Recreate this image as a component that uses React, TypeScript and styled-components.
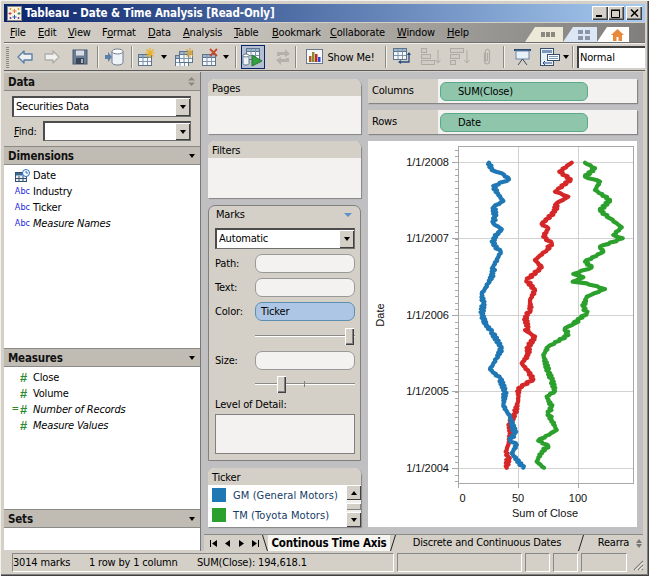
import React from "react";
import styled, { createGlobalStyle } from "styled-components";

const UI = `"DejaVu Sans Condensed", "DejaVu Sans", "Liberation Sans", sans-serif`;
const FACE = "#d4d0c8";

const Global = createGlobalStyle`
  html, body { margin: 0; padding: 0; background: ${FACE}; }
  * { box-sizing: border-box; }
  body { font-family: ${UI}; font-size: 11px; letter-spacing: -0.18px; color: #000; }
`;

const Win = styled.div`
  width: 649px; height: 576px; overflow: hidden; background: ${FACE};
  padding: 4px 4px 4px 4px; display: flex; flex-direction: column;
  box-shadow: inset 1px 1px 0 #f4f2ec, inset -1px -1px 0 #404040, inset -2px -2px 0 #808080;
`;
const TitleBar = styled.div`
  height: 18px; flex: none; display: flex; align-items: center; padding: 0 3px;
  background: linear-gradient(90deg, #0a246a 0%, #a6caf0 100%);
  color: #fff; font-weight: bold; font-size: 11.5px; letter-spacing: -0.1px;
`;
const TitleText = styled.span`margin-left: 3px; flex: 1; white-space: nowrap;`;
const WinBtn = styled.div<{ $gap?: number }>`
  width: 16px; height: 14px; margin-left: ${p => p.$gap ?? 0}px; background: ${FACE}; display: flex; align-items: center; justify-content: center;
  box-shadow: inset 1px 1px 0 #fff, inset -1px -1px 0 #404040, inset -2px -2px 0 #808080;
`;
const MenuBar = styled.div`
  height: 20px; margin-top: 1px; flex: none; display: flex; align-items: stretch;
  background: linear-gradient(90deg, ${FACE} 0%, #c8c4bd 35%, #a8a5a0 60%, #807f7d 100%);
  border-bottom: 1px solid #6e6e6e;
  padding-left: 6px;
`;
const MenuItem = styled.div<{ $w: number }>`
  width: ${p => p.$w}px; line-height: 20px; white-space: nowrap;
  u { text-underline-offset: 1px; }
`;
const ViewTabs = styled.div`margin-left: auto; display: flex; align-items: flex-end; padding-right: 16px;`;
const ViewTab = styled.div<{ $bg: string; $w: number }>`
  width: ${p => p.$w}px; height: 15px; background: ${p => p.$bg}; display: flex; align-items: center; justify-content: center;
  padding-left: 8px; clip-path: polygon(10px 0, 100% 0, 100% 100%, 0 100%);
`;
const Toolbar = styled.div`
  height: 28px; flex: none; display: flex; align-items: center; background: ${FACE};
  border-top: 1px solid #f0eee8; border-bottom: 1px solid #5c5c5c; overflow: hidden;
`;
const Grip = styled.div`
  width: 3px; height: 21px; margin: 0 5px 0 2px; flex: none;
  background: repeating-linear-gradient(180deg, #8a8880 0 1px, ${FACE} 1px 2px);
`;
const Slot = styled.div<{ $w: number; $on?: boolean }>`
  width: ${p => p.$w}px; height: 24px; flex: none; display: flex; align-items: center; justify-content: center; white-space: nowrap;
  ${p => p.$on ? `background: #b4bfd2; border: 1px solid #0a246a;` : ``}
`;
const Sep = styled.div`
  width: 2px; height: 22px; flex: none; background: #8c8a84; border-right: 1px solid #f4f2ec;
`;
const Caret = styled.div`
  width: 0; height: 0; border-left: 3.5px solid transparent; border-right: 3.5px solid transparent; border-top: 4px solid #000;
`;
const NormalBox = styled.div`
  width: 70px; height: 22px; margin-left: 3px; flex: none; background: #fff; border-top: 2px solid #404040; border-left: 2px solid #404040;
  line-height: 20px; padding-left: 1px;
`;
const Main = styled.div`flex: 1; min-height: 0; display: flex; margin-top: 1px; padding-right: 2px;`;
const Left = styled.div`
  width: 197px; flex: none; display: flex; flex-direction: column; background: ${FACE}; padding-top: 1px;
  border-right: 1px solid #777;
`;
const PanelHead = styled.div<{ $top?: boolean }>`
  height: ${p => p.$top ? 18 : 19}px; flex: none; background: #c0bcb4; border-top: 1px solid #8a8a86; border-bottom: 1px solid #8a8a86;
  display: flex; align-items: center; justify-content: space-between; padding: 0 5px 0 4px;
  font-weight: bold; font-size: 11.5px; color: #111;
  ${p => p.$top ? `border-top: none;` : ``}
`;
const DataBody = styled.div`
  height: 55px; flex: none; background: ${FACE}; padding: 5px 9px 0 8px; display: flex; flex-direction: column; gap: 4px;
`;
const FindRow = styled.div`display: flex; align-items: center; justify-content: space-between; padding-left: 2px;`;
const Combo = styled.div<{ $w: number; $h?: number }>`
  width: ${p => p.$w}px; height: ${p => p.$h ?? 20}px; background: #fff; display: flex; align-items: stretch; justify-content: space-between; flex: none;
  border-top: 2px solid #4c4c4c; border-left: 2px solid #4c4c4c; border-right: 1px solid #707070; border-bottom: 1px solid #707070;
`;
const ComboText = styled.span`padding-left: 2px; line-height: 17px;`;
const ComboBtn = styled.div`
  width: 15px; background: ${FACE}; display: flex; align-items: center; justify-content: center;
  box-shadow: inset 1px 1px 0 #fff, inset -1px -1px 0 #404040;
`;
const List = styled.div<{ $h: number }>`
  height: ${p => p.$h}px; flex: none; background: #fff; padding-top: 2px;
`;
const Row = styled.div<{ $i?: boolean }>`
  height: 16px; display: flex; align-items: center; font-style: ${p => p.$i ? "italic" : "normal"};
`;
const RowIcon = styled.span`width: 29px; flex: none; display: flex; justify-content: flex-end; padding-right: 3px; align-items: center;`;
const Abc = styled.span`color: #2222dd; font-size: 9px; font-style: normal; letter-spacing: 0;`;
const Hash = styled.span`color: #2d8a2d; font-size: 13px; font-weight: bold; font-style: normal; font-family: "Liberation Sans", sans-serif; line-height: 13px; margin-right: 3px;`;
const Eq = styled.span`color: #2d8a2d; font-size: 10px; font-style: normal; line-height: 10px; margin-right: 1px;`;
const Work = styled.div`
  flex: 1; min-width: 0; display: flex; flex-direction: column; background: #c0c0c3;
`;
const WorkBody = styled.div`flex: 1; min-height: 0; display: flex; gap: 7px; padding: 7px 6px 7px 7px;`;
const Col1 = styled.div`width: 153px; flex: none; display: flex; flex-direction: column; gap: 7px;`;
const Col2 = styled.div`width: 269px; flex: none; display: flex; flex-direction: column; gap: 7px;`;
const Card = styled.div<{ $h: number }>`
  height: ${p => p.$h}px; flex: none; background: #f3f2f0; border-radius: 7px 7px 0 0; overflow: hidden;
  box-shadow: 1px 1px 1px #858585; display: flex; flex-direction: column;
`;
const CardHead = styled.div`height: 17px; flex: none; background: ${FACE}; line-height: 19px; padding-left: 4px;`;
const Marks = styled.div`
  height: 256px; flex: none; background: ${FACE}; border: 1px solid #808080; border-radius: 7px 7px 0 0;
  padding: 0 5px 0 6px; display: flex; flex-direction: column;
`;
const MarksHead = styled.div`height: 22px; flex: none; display: flex; align-items: center; justify-content: space-between; padding: 0 3px 5px 1px;`;
const Tri = styled.div`width: 0; height: 0; border-left: 4px solid transparent; border-right: 4px solid transparent; border-top: 4px solid #5f8fc9;`;
const ShelfRow = styled.div<{ $mt: number }>`
  margin-top: ${p => p.$mt}px; display: flex; align-items: center; height: 19px; flex: none;
`;
const ShelfLabel = styled.div`width: 40px; flex: none;`;
const Pill = styled.div<{ $blue?: boolean }>`
  flex: 1; height: 19px; border-radius: 7px; line-height: 17px; padding-left: 5px;
  background: ${p => p.$blue ? "#adc6e6" : "#f3f2f0"}; border: 1px solid ${p => p.$blue ? "#5c8fb0" : "#999"};
`;
const Slider = styled.div<{ $mt: number }>`
  margin-top: ${p => p.$mt}px; height: 17px; flex: none; margin-left: 40px; position: relative;
  &::before { content: ""; position: absolute; left: 0; right: 0; top: 7px; height: 2px; background: linear-gradient(#8a8a86 50%, #fff 50%); }
`;
const Thumb = styled.div<{ $x: number }>`
  position: absolute; left: ${p => p.$x}px; top: 0; width: 9px; height: 17px; background: ${FACE};
  box-shadow: inset 1px 1px 0 #fff, inset -1px -1px 0 #404040, inset -2px -2px 0 #808080;
`;
const Tick = styled.div<{ $x: number }>`position: absolute; left: ${p => p.$x}px; top: 5px; width: 1px; height: 6px; background: #808080;`;
const DetailLabel = styled.div`margin-top: 4px; height: 15px; line-height: 15px; flex: none;`;
const Detail = styled.div`height: 40px; flex: none; margin-top: 2px; background: #f3f2f0; border: 1px solid #808080;`;
const Legend = styled.div`flex: 1; display: flex; background: #fff; min-height: 0;`;
const LegendRows = styled.div`flex: 1; padding: 3px 0 0 4px; display: flex; flex-direction: column; gap: 6px;`;
const LegendRow = styled.div`display: flex; align-items: center; height: 14px; color: #143a66; white-space: nowrap; gap: 7px; letter-spacing: 0.1px;`;
const Swatch = styled.div<{ $c: string }>`width: 14px; height: 14px; background: ${p => p.$c};`;
const Scroll = styled.div`width: 15px; flex: none; display: flex; flex-direction: column; justify-content: space-between; background: #f2f0ec;`;
const ScrollBtn = styled.div`
  height: 15px; background: ${FACE}; display: flex; align-items: center; justify-content: center;
  box-shadow: inset 1px 1px 0 #fff, inset -1px -1px 0 #404040;
`;
const ScrollThumb = styled.div`height: 7px; background: ${FACE}; box-shadow: inset 1px 1px 0 #fff, inset -1px -1px 0 #808080;`;
const CaretUp = styled(Caret)`border-top: none; border-bottom: 4px solid #000;`;
const Shelf = styled.div`
  height: 24px; flex: none; display: flex; align-items: center; background: #f3f2f0; box-shadow: 1px 1px 1px #858585;
`;
const ShelfName = styled.div`
  width: 70px; height: 100%; flex: none; background: ${FACE}; line-height: 24px; padding-left: 4px;
`;
const GreenPill = styled.div`
  width: 148px; height: 19px; margin-left: 2px; background: #8fc5ab; border: 1px solid #5aa98a; border-radius: 6px;
  line-height: 17px; padding-left: 17px;
`;
const ChartBox = styled.div`flex: 1; min-height: 0; background: #fff; display: flex;`;
const TabBar = styled.div`
  height: 17px; flex: none; background: ${FACE}; border-top: 1px solid #8a8a86; display: flex; align-items: stretch; overflow: hidden;
  margin-left: 3px;
`;
const NavBtns = styled.div`width: 58px; flex: none; display: flex; align-items: center; padding-left: 5px; gap: 6px;`;
const NavBtn = styled.div`width: 8px; display: flex; justify-content: center;`;
const SheetTab = styled.div<{ $w: number; $on?: boolean }>`
  width: ${p => p.$w}px; flex: none; text-align: center; line-height: 16px; white-space: nowrap; overflow: hidden;
  font-weight: ${p => p.$on ? "bold" : "normal"}; font-size: ${p => p.$on ? "11.5px" : "11px"};
  background: ${p => p.$on ? "#f6f5f2" : "transparent"};
`;
const Slant = styled.svg`width: 6px; height: 16px; flex: none; display: block;`;
const TabArrows = styled.div`flex: 1; display: flex; flex-direction: column; align-items: center; justify-content: center; gap: 1px;`;
const SmallUp = styled(CaretUp)`border-bottom-color: #777;`;
const SmallDown = styled(Caret)`border-top-color: #777;`;
const StatusBar = styled.div`
  height: 21px; flex: none; display: flex; align-items: stretch; padding: 2px 0 0 0; gap: 3px; background: ${FACE}; position: relative;
`;
const Cell = styled.div<{ $w: number }>`
  width: ${p => p.$w}px; flex: none; border-top: 1px solid #888; border-left: 1px solid #888; border-bottom: 1px solid #fff; border-right: 1px solid #fff;
  display: flex; align-items: center; white-space: nowrap;
`;
const StatusText = styled.span<{ $w: number }>`width: ${p => p.$w}px; flex: none;`;
const FirstCell = styled(Cell)`margin-left: 8px;`;
const SizeGrip = styled.svg`width: 12px; height: 12px; position: absolute; right: 1px; bottom: 1px;`;

/* ---------- icons ---------- */
const Logo = () => (
  <svg width="15" height="15" viewBox="0 0 15 15">
    <rect x="0.5" y="0.5" width="14" height="14" fill="#f6f2e8" stroke="#8a8680" />
    <path d="M7.5 3v4M5.5 5h4" stroke="#e8762c" />
    <path d="M7.5 9v4M5.5 11h4" stroke="#2a5ea8" />
    <path d="M3 6v3M1.5 7.500h3" stroke="#c23a3a" />
    <path d="M12 6v3M10.500 7.500h3" stroke="#2a8a5e" />
    <path d="M3.500 2v2M2.500 3h2M11.500 2v2M10.500 3h2" stroke="#d8a020" />
    <path d="M3.500 11v2M2.500 12h2M11.500 11v2M10.500 12h2" stroke="#7a3fa0" />
  </svg>
);
const Arrow = ({ c, flip }: { c: string; flip?: boolean }) => (
  <svg width="16" height="14" viewBox="0 0 16 14" transform={flip ? "scale(-1 1)" : undefined}>
    <path d="M1 7 L7 1 V4 H15 V10 H7 V13 Z" fill="#f0f0f0" stroke={c} strokeWidth="1.400" strokeLinejoin="round" />
  </svg>
);
const Save = () => (
  <svg width="16" height="16" viewBox="0 0 16 16">
    <rect x="1" y="1" width="14" height="14" fill="#6a7f96" stroke="#46586c" />
    <rect x="4" y="1.500" width="8" height="5" fill="#d8dee4" />
    <rect x="4" y="9" width="8" height="6" fill="#3a4656" />
    <rect x="9" y="10" width="2" height="4" fill="#a8b2bc" />
  </svg>
);
const Cylinder = () => (
  <svg width="20" height="18" viewBox="0 0 20 18">
    <path d="M0 7h3V4l4 5-4 5v-3H0z" fill="#5a7fa8" />
    <path d="M7 3.500v11c0 1.500 2.500 2.500 5.500 2.500s5.500-1 5.500-2.500v-11z" fill="#eef3f8" stroke="#6c7c8c" />
    <ellipse cx="12.500" cy="3.500" rx="5.500" ry="2.500" fill="#fff" stroke="#6c7c8c" />
  </svg>
);
const Grid = ({ x, y }: { x: number; y: number }) => (
  <g transform={`translate(${x} ${y})`}>
    <rect x="0.500" y="0.500" width="13" height="11" fill="#f4f8fc" stroke="#5e7488" />
    <rect x="0.500" y="0.500" width="13" height="3" fill="#9cb6d0" stroke="#5e7488" />
    <path d="M5 1v10M9.500 1v10M1 7.500h12" stroke="#7e94a8" />
  </g>
);
const Star = ({ x, y, c = "#f0b020" }: { x: number; y: number; c?: string }) => (
  <path transform={`translate(${x} ${y})`} d="M5 0v10M0 5h10M1.500 1.500l7 7M8.500 1.500l-7 7" stroke={c} strokeWidth="1.200" />
);
const NewSheet = () => (
  <svg width="18" height="18" viewBox="0 0 18 18"><Grid x={0} y={6} /><Star x={7} y={0} /></svg>
);
const NewDash = () => (
  <svg width="18" height="18" viewBox="0 0 18 18">
    <Grid x={0} y={7} /><Grid x={4} y={3} /><Star x={10} y={0} c="#d8a840" />
  </svg>
);
const Clear = () => (
  <svg width="18" height="18" viewBox="0 0 18 18">
    <Grid x={0} y={6} />
    <path d="M8 1l7 7M15 1l-7 7" stroke="#c8482c" strokeWidth="1.800" />
  </svg>
);
const Run = () => (
  <svg width="22" height="20" viewBox="0 0 22 20">
    <Grid x={4} y={1} />
    <path d="M1 8.500v8c0 2 6 2 6 0v-8z" fill="#eef3f8" stroke="#66788a" />
    <ellipse cx="4" cy="8.500" rx="3" ry="1.500" fill="#fff" stroke="#66788a" />
    <path d="M10 8l10 6-10 5z" fill="#35a040" stroke="#257a30" />
  </svg>
);
const Refresh = () => (
  <svg width="16" height="18" viewBox="0 0 16 18">
    <path d="M2 8 V4 H10 V1 L15 6 L10 9 V7 H5 V8 Z M14 10 V14 H6 V17 L1 12 L6 9 V11 H11 V10 Z" fill="#b4b1aa" />
  </svg>
);
const ShowMe = () => (
  <svg width="17" height="16" viewBox="0 0 17 16">
    <rect x="0.500" y="0.500" width="16" height="14" fill="#f6f8fa" stroke="#66788a" />
    <rect x="3" y="7" width="2.500" height="6" fill="#b05a20" />
    <rect x="6" y="3" width="2.500" height="10" fill="#8a8a2a" />
    <rect x="9" y="5" width="2.500" height="8" fill="#c02a2a" />
    <rect x="12" y="8" width="2.500" height="5" fill="#2a4ad0" />
  </svg>
);
const Swap = () => (
  <svg width="20" height="18" viewBox="0 0 20 18">
    <Grid x={0} y={0} />
    <path d="M16 5v9H6" fill="none" stroke="#2a4a80" strokeWidth="1.300" />
    <path d="M14 7l2-3 2 3zM8 12l-3 2 3 2z" fill="#2a4a80" />
  </svg>
);
const SortA = () => (
  <svg width="20" height="18" viewBox="0 0 20 18" fill="#cfccc5" stroke="#aeaba4">
    <rect x="0.500" y="0.500" width="5" height="4" /><rect x="0.500" y="6.500" width="9" height="4" /><rect x="0.500" y="12.500" width="13" height="4" />
    <path d="M17 2v12M14.500 12l2.500 3 2.500-3" fill="none" />
  </svg>
);
const SortD = () => (
  <svg width="20" height="18" viewBox="0 0 20 18" fill="#cfccc5" stroke="#aeaba4">
    <rect x="0.500" y="0.500" width="13" height="4" /><rect x="0.500" y="6.500" width="9" height="4" /><rect x="0.500" y="12.500" width="5" height="4" />
    <path d="M17 2v12M14.500 12l2.500 3 2.500-3" fill="none" />
  </svg>
);
const Clip = () => (
  <svg width="10" height="18" viewBox="0 0 10 18">
    <path d="M2.500 5v8c0 4 5 4 5 0V3.500c0-3-4-3-4 0V12c0 1 2 1 2 0V5" fill="none" stroke="#aeaba4" strokeWidth="1.200" />
  </svg>
);
const Present = () => (
  <svg width="17" height="18" viewBox="0 0 17 18">
    <rect x="0" y="1" width="17" height="2" fill="#2a4a70" />
    <rect x="2" y="3" width="13" height="8" fill="#e8f0f8" stroke="#6a88a8" />
    <path d="M8.500 11L4 17M8.500 11L13 17" stroke="#3a4a5a" />
  </svg>
);
const Fit = () => (
  <svg width="20" height="18" viewBox="0 0 20 18">
    <rect x="0.500" y="0.500" width="13" height="17" fill="#e8f0f8" stroke="#3a4e68" />
    <rect x="2" y="2" width="10" height="3" fill="#7a96b8" />
    <rect x="7.500" y="6.500" width="12" height="6" fill="#fff" stroke="#3a4e68" />
    <path d="M9 8.500h9M9 10.500h9" stroke="#7a96b8" />
    <path d="M12 15H3M5 13l-2 2 2 2" fill="none" stroke="#2a4a80" />
  </svg>
);
const House = () => (
  <svg width="13" height="12" viewBox="0 0 13 12">
    <path d="M6.500 0L13 6H11V12H7.500V8H5.500V12H2V6H0Z" fill="#e8883a" />
  </svg>
);
const Bars = () => (
  <svg width="14" height="5" viewBox="0 0 14 5"><path d="M0 0h4v5H0zM5 0h4v5H5zM10 0h4v5h-4z" fill="#8c8a80" /></svg>
);
const Squares = () => (
  <svg width="12" height="10" viewBox="0 0 12 10"><path d="M0 0h5v4H0zM7 0h5v4H7zM0 6h5v4H0zM7 6h5v4H7z" fill="#8a96a8" /></svg>
);
const DateIcon = () => (
  <svg width="15" height="13" viewBox="0 0 15 13">
    <rect x="0.500" y="3.500" width="11" height="9" fill="#eaf0f6" stroke="#33506e" />
    <rect x="1" y="4" width="10" height="2.500" fill="#3a6a9a" />
    <path d="M4 7v5M8 7v5M1 9.500h10" stroke="#33506e" />
    <circle cx="11" cy="4" r="3.500" fill="#fff" stroke="#2a70c0" />
    <path d="M11 2v2h2" fill="none" stroke="#2a70c0" />
  </svg>
);
const DataUpDown = () => (
  <svg width="7" height="9" viewBox="0 0 7 9"><path d="M3.500 0L7 3.500H0zM3.500 9L0 5.500h7z" fill="#8a8880" /></svg>
);

/* ---------- chart ---------- */
const Z8 = { x: 440, y: 140 };
const Z9 = { x: 440, y: 320 };
const abs = (a: number[][], o: { x: number; y: number }) => a.map(([x, y]) => [o.x + x / 3, o.y + y / 3]);
const BLUE = [
  ...abs([[147,68],[155,90],[185,100],[207,118],[160,138],[175,165],[190,183],[162,200],[165,230],[160,250],[185,268],[160,295],[160,315],[182,335],[165,372],[160,380],[160,400],[145,430],[125,462],[130,490],[125,525],[140,555]], Z8),
  ...abs([[130,5],[155,35],[185,85],[170,115],[150,148],[180,175],[195,215],[190,258],[210,290],[225,340],[210,360],[230,375],[215,400],[250,443]], Z9),
];
const RED = [
  ...abs([[395,68],[358,95],[392,118],[345,155],[385,170],[350,190],[345,215],[305,252],[325,265],[310,290],[335,310],[320,330],[285,360],[305,382],[260,420],[285,452],[270,480],[272,510],[255,530],[265,570]], Z8),
  ...abs([[255,30],[285,50],[265,80],[265,105],[245,130],[265,155],[280,178],[235,205],[235,240],[225,280],[210,310],[212,345],[205,375],[197,395],[205,410],[200,443]], Z9),
];
const GREEN = [
  ...abs([[435,68],[465,85],[435,110],[480,125],[465,150],[510,180],[480,212],[510,235],[545,262],[520,285],[548,295],[480,320],[490,335],[435,365],[455,382],[400,402],[430,412],[398,425],[440,430],[495,447],[440,470],[430,500],[440,520],[400,550]], Z8),
  ...abs([[415,5],[375,25],[385,45],[325,80],[310,105],[325,155],[335,180],[345,213],[320,230],[335,260],[325,280],[335,300],[350,330],[295,362],[325,378],[305,395],[290,425],[312,443]], Z9),
];
const jagged = (pts: number[][], seed: number) => {
  const out: string[] = [];
  pts.forEach(([x, y], i) => {
    if (i === 0) { out.push(`${x.toFixed(1)},${y.toFixed(1)}`); return; }
    const [px, py] = pts[i - 1];
    const n = Math.max(1, Math.round(Math.abs(y - py) / 1.5));
    for (let k = 1; k <= n; k++) {
      const t = k / n;
      const j = k === n ? 0 : Math.sin((i * 13 + k * 7 + seed) * 12.9898) * 1.6;
      out.push(`${(px + (x - px) * t + j).toFixed(1)},${(py + (y - py) * t).toFixed(1)}`);
    }
  });
  return out.join(" ");
};
const years = [[162, "1/1/2008"], [238, "1/1/2007"], [315, "1/1/2006"], [391, "1/1/2005"], [468, "1/1/2004"]] as [number, string][];
const minor = Array.from({ length: 53 }, (_, i) => 149.5 + i * 6.375);

const ChartSvg = styled.svg`letter-spacing: 0;`;
const Chart = () => (
  <ChartSvg width="269" height="386" viewBox="368 141 269 386" fontFamily="'Liberation Sans', sans-serif" fontSize="11" fill="#111">
    <g stroke="#d2d2d2">
      {years.map(([y]) => <path key={y} d={`M458 ${y}.5H633`} />)}
      <path d="M518.500 146V484M578.500 146V484" />
    </g>
    <rect x="458.500" y="146.500" width="175" height="337" fill="none" stroke="#a8a8a8" />
    <g stroke="#a8a8a8">
      {minor.map(y => <path key={y} d={`M455 ${Math.round(y)}.5H458`} />)}
      {years.map(([y]) => <path key={y} d={`M452 ${y}.5H458`} />)}
      <path d="M458.500 484V488M518.500 484V488M578.500 484V488" />
    </g>
    <g fill="none" strokeWidth="4.200" strokeLinejoin="round" strokeLinecap="round">
      <polyline points={jagged(RED, 2)} stroke="#d62728" />
      <polyline points={jagged(BLUE, 5)} stroke="#1f77b4" />
      <polyline points={jagged(GREEN, 9)} stroke="#2ca02c" />
    </g>
    {years.map(([y, t]) => <text key={t} x="449" y={y + 4} textAnchor="end">{t}</text>)}
    <text x="462.500" y="502" textAnchor="middle">0</text>
    <text x="518" y="502" textAnchor="middle">50</text>
    <text x="578" y="502" textAnchor="middle">100</text>
    <text x="545" y="517" textAnchor="middle">Sum of Close</text>
    <text transform="translate(384 315) rotate(-90)" textAnchor="middle">Date</text>
  </ChartSvg>
);

const Slash = ({ back }: { back?: boolean }) => (
  <Slant viewBox="0 0 6 16">
    <path d={back ? "M0.500 0L5.500 16" : "M5.500 0L0.500 16"} stroke="#222" fill="none" />
  </Slant>
);

export default function App() {
  return (
    <>
      <Global />
      <Win>
        <TitleBar>
          <Logo />
          <TitleText>Tableau - Date &amp; Time Analysis [Read-Only]</TitleText>
          <WinBtn><svg width="8" height="8" viewBox="0 0 8 8"><path d="M0 6h6v2H0z" /></svg></WinBtn>
          <WinBtn><svg width="10" height="9" viewBox="0 0 10 9"><path d="M0.500 1.500h8v7h-8zM0 1h9" fill="none" stroke="#000" /></svg></WinBtn>
          <WinBtn $gap={2}><svg width="9" height="8" viewBox="0 0 9 8"><path d="M1 0.500l7 7M8 0.500l-7 7" stroke="#000" strokeWidth="1.500" /></svg></WinBtn>
        </TitleBar>
        <MenuBar>
          <MenuItem $w={28}><u>F</u>ile</MenuItem>
          <MenuItem $w={30}><u>E</u>dit</MenuItem>
          <MenuItem $w={34}><u>V</u>iew</MenuItem>
          <MenuItem $w={46}>F<u>o</u>rmat</MenuItem>
          <MenuItem $w={35}><u>D</u>ata</MenuItem>
          <MenuItem $w={51}><u>A</u>nalysis</MenuItem>
          <MenuItem $w={38}><u>T</u>able</MenuItem>
          <MenuItem $w={58}><u>B</u>ookmark</MenuItem>
          <MenuItem $w={67}><u>C</u>ollaborate</MenuItem>
          <MenuItem $w={50}><u>W</u>indow</MenuItem>
          <MenuItem $w={30}><u>H</u>elp</MenuItem>
          <ViewTabs>
            <ViewTab $bg="#ece9d8" $w={38}><Bars /></ViewTab>
            <ViewTab $bg="#dce6f4" $w={34}><Squares /></ViewTab>
            <ViewTab $bg="#ffffff" $w={32}><House /></ViewTab>
          </ViewTabs>
        </MenuBar>
        <Toolbar>
          <Grip />
          <Slot $w={22}><Arrow c="#5a7fa8" /></Slot>
          <Slot $w={32}><Arrow c="#b0aea8" flip /></Slot>
          <Slot $w={24}><Save /></Slot>
          <Slot $w={5} />
          <Sep />
          <Slot $w={32}><Cylinder /></Slot>
          <Sep />
          <Slot $w={28}><NewSheet /></Slot>
          <Slot $w={6}><Caret /></Slot>
          <Slot $w={34}><NewDash /></Slot>
          <Slot $w={20}><Clear /></Slot>
          <Slot $w={10}><Caret /></Slot>
          <Slot $w={4} />
          <Sep />
          <Slot $w={4} />
          <Slot $w={24} $on><Run /></Slot>
          <Slot $w={6} />
          <Slot $w={24}><Refresh /></Slot>
          <Sep />
          <Slot $w={8} />
          <Slot $w={18}><ShowMe /></Slot>
          <Slot $w={4} />
          <Slot $w={48}>Show Me!</Slot>
          <Slot $w={10} />
          <Sep />
          <Slot $w={6} />
          <Slot $w={20}><Swap /></Slot>
          <Slot $w={8} />
          <Slot $w={20}><SortA /></Slot>
          <Slot $w={9} />
          <Slot $w={20}><SortD /></Slot>
          <Slot $w={12} />
          <Slot $w={10}><Clip /></Slot>
          <Slot $w={11} />
          <Sep />
          <Slot $w={9} />
          <Slot $w={17}><Present /></Slot>
          <Slot $w={9} />
          <Slot $w={20}><Fit /></Slot>
          <Slot $w={12}><Caret /></Slot>
          <Sep />
          <NormalBox>Normal</NormalBox>
        </Toolbar>
        <Main>
          <Left>
            <PanelHead $top>Data<DataUpDown /></PanelHead>
            <DataBody>
              <Combo $w={179} $h={21}>
                <ComboText>Securities Data</ComboText>
                <ComboBtn><Caret /></ComboBtn>
              </Combo>
              <FindRow>
                <span><u>F</u>ind:</span>
                <Combo $w={148}><span /><ComboBtn><Caret /></ComboBtn></Combo>
              </FindRow>
            </DataBody>
            <PanelHead>Dimensions<Caret /></PanelHead>
            <List $h={183}>
              <Row><RowIcon><DateIcon /></RowIcon>Date</Row>
              <Row><RowIcon><Abc>Abc</Abc></RowIcon>Industry</Row>
              <Row><RowIcon><Abc>Abc</Abc></RowIcon>Ticker</Row>
              <Row $i><RowIcon><Abc>Abc</Abc></RowIcon>Measure Names</Row>
            </List>
            <PanelHead>Measures<Caret /></PanelHead>
            <List $h={142}>
              <Row><RowIcon><Hash>#</Hash></RowIcon>Close</Row>
              <Row><RowIcon><Hash>#</Hash></RowIcon>Volume</Row>
              <Row $i><RowIcon><Eq>=</Eq><Hash>#</Hash></RowIcon>Number of Records</Row>
              <Row $i><RowIcon><Hash>#</Hash></RowIcon>Measure Values</Row>
            </List>
            <PanelHead>Sets<Caret /></PanelHead>
            <List $h={22} />
          </Left>
          <Work>
            <WorkBody>
              <Col1>
                <Card $h={55}><CardHead>Pages</CardHead></Card>
                <Card $h={57}><CardHead>Filters</CardHead></Card>
                <Marks>
                  <MarksHead>Marks<Tri /></MarksHead>
                  <Combo $w={140} $h={21}>
                    <ComboText>Automatic</ComboText>
                    <ComboBtn><Caret /></ComboBtn>
                  </Combo>
                  <ShelfRow $mt={5}><ShelfLabel>Path:</ShelfLabel><Pill /></ShelfRow>
                  <ShelfRow $mt={5}><ShelfLabel>Text:</ShelfLabel><Pill /></ShelfRow>
                  <ShelfRow $mt={5}><ShelfLabel>Color:</ShelfLabel><Pill $blue>Ticker</Pill></ShelfRow>
                  <Slider $mt={7}><Thumb $x={90} /></Slider>
                  <ShelfRow $mt={6}><ShelfLabel>Size:</ShelfLabel><Pill /></ShelfRow>
                  <Slider $mt={6}><Tick $x={49} /><Thumb $x={22} /></Slider>
                  <DetailLabel>Level of Detail:</DetailLabel>
                  <Detail />
                </Marks>
                <Card $h={59}>
                  <CardHead>Ticker</CardHead>
                  <Legend>
                    <LegendRows>
                      <LegendRow><Swatch $c="#1f77b4" />GM (General Motors)</LegendRow>
                      <LegendRow><Swatch $c="#2ca02c" />TM (Toyota Motors)</LegendRow>
                    </LegendRows>
                    <Scroll>
                      <ScrollBtn><CaretUp /></ScrollBtn>
                      <ScrollThumb />
                      <ScrollBtn><Caret /></ScrollBtn>
                    </Scroll>
                  </Legend>
                </Card>
              </Col1>
              <Col2>
                <Shelf><ShelfName>Columns</ShelfName><GreenPill>SUM(Close)</GreenPill></Shelf>
                <Shelf><ShelfName>Rows</ShelfName><GreenPill>Date</GreenPill></Shelf>
                <ChartBox><Chart /></ChartBox>
              </Col2>
            </WorkBody>
            <TabBar>
              <NavBtns>
                <NavBtn><svg width="7" height="7" viewBox="0 0 7 7"><path d="M0 0h1v7H0zM7 0v7L2 3.500z" /></svg></NavBtn>
                <NavBtn><svg width="5" height="7" viewBox="0 0 5 7"><path d="M5 0v7L0 3.500z" /></svg></NavBtn>
                <NavBtn><svg width="5" height="7" viewBox="0 0 5 7"><path d="M0 0v7l5-3.500z" /></svg></NavBtn>
                <NavBtn><svg width="7" height="7" viewBox="0 0 7 7"><path d="M6 0h1v7H6zM0 0v7l5-3.500z" /></svg></NavBtn>
              </NavBtns>
              <Slash back />
              <SheetTab $w={122} $on>Continous Time Axis</SheetTab>
              <Slash />
              <SheetTab $w={182}>Discrete and Continuous Dates</SheetTab>
              <Slash />
              <SheetTab $w={50}>&nbsp;&nbsp;&nbsp;Rearra</SheetTab>
              <TabArrows><SmallUp /><SmallDown /></TabArrows>
            </TabBar>
          </Work>
        </Main>
        <StatusBar>
          <FirstCell $w={382}>
            <StatusText $w={76}>3014 marks</StatusText>
            <StatusText $w={108}>1 row by 1 column</StatusText>
            <StatusText $w={180}>SUM(Close): 194,618.1</StatusText>
          </FirstCell>
          <Cell $w={125} />
          <Cell $w={25} />
          <Cell $w={25} />
          <Cell $w={46} />
          <SizeGrip viewBox="0 0 12 12">
            <path d="M11 2L2 11M11 6L6 11M11 10L10 11" stroke="#808080" strokeWidth="1.200" />
            <path d="M11 3.500L3.500 11M11 7.500L7.500 11" stroke="#fff" />
          </SizeGrip>
        </StatusBar>
      </Win>
    </>
  );
}
